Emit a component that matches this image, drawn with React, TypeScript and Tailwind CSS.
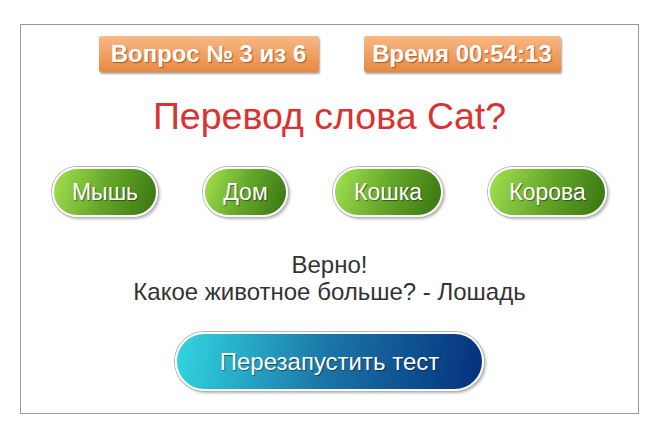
import React from 'react'

const font = { fontFamily: '"Liberation Sans", Arial, sans-serif' }

const answers = [
  { label: 'Мышь', w: 'w-[106px]' },
  { label: 'Дом', w: 'w-[85px]' },
  { label: 'Кошка', w: 'w-[110px]' },
  { label: 'Корова', w: 'w-[119px]' },
]

function OrangeBadge({ children, w }: { children: React.ReactNode; w: string }) {
  return (
    <div
      className={`${w} h-[36px] flex items-center justify-center rounded-[2px] bg-gradient-to-b from-[#f7b886] to-[#e9883f] text-white font-bold text-[24px] shadow-[1px_2px_2px_rgba(0,0,0,0.35)] [text-shadow:1px_1px_1px_rgba(120,50,0,0.6)]`}
    >
      {children}
    </div>
  )
}

export default function App() {
  return (
    <div className="w-[660px] h-[440px] bg-white pt-[24px] pl-[20px]" style={font}>
      <div className="w-[619px] h-[390px] border border-[#9a9a9a] flex flex-col items-center">
        {/* header badges */}
        <div className="flex gap-[45px] mt-[11px]">
          <OrangeBadge w="w-[220px]">Вопрос № 3 из 6</OrangeBadge>
          <OrangeBadge w="w-[197px]">Время 00:54:13</OrangeBadge>
        </div>

        <h1 className="mt-[22px] text-[37.5px] leading-[44px] text-[#d83331]">Перевод слова Cat?</h1>

        {/* answers */}
        <div className="flex gap-[45px] mt-[29px]">
          {answers.map(a => (
            <button
              key={a.label}
              className={`${a.w} h-[50px] rounded-full border-2 border-white bg-linear-[110deg] from-[#a4e24f] via-[#64a629] to-[#387510] text-white text-[23px] shadow-[0_0_0_1px_#b5b5b5,2px_2px_3px_rgba(0,0,0,0.3)] [text-shadow:1px_1px_1px_rgba(0,0,0,0.45)]`}
            >
              {a.label}
            </button>
          ))}
        </div>

        {/* result */}
        <div className="mt-[34px] text-center text-[24px] leading-[27px] text-[#333]">
          <div>Верно!</div>
          <div>Какое животное больше? - Лошадь</div>
        </div>

        <button className="mt-[27px] w-[309px] h-[59px] rounded-full border-2 border-white bg-linear-[100deg] from-[#32d6e0] via-[#1a74a6] to-[#04307c] text-white text-[24px] shadow-[0_0_0_1px_#b5b5b5,2px_2px_3px_rgba(0,0,0,0.3)] [text-shadow:1px_1px_1px_rgba(0,0,0,0.45)]">
          Перезапустить тест
        </button>
      </div>
    </div>
  )
}
